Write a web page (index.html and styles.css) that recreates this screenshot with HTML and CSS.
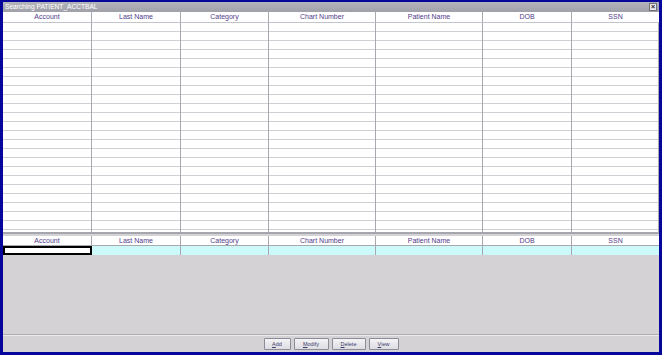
FILE: index.html
```html
<!DOCTYPE html>
<html>
<head>
<meta charset="utf-8">
<link rel="stylesheet" href="styles.css">
</head>
<body>
<div class="window">
  <div class="titlebar">
    <span class="title">Searching PATIENT_ACCTBAL</span>
    <span class="close">×</span>
  </div>
  <div class="grid results">
    <div class="hcell">Account</div>
    <div class="hcell">Last Name</div>
    <div class="hcell">Category</div>
    <div class="hcell">Chart Number</div>
    <div class="hcell">Patient Name</div>
    <div class="hcell">DOB</div>
    <div class="hcell last">SSN</div>
    <div class="bcell"></div>
    <div class="bcell"></div>
    <div class="bcell"></div>
    <div class="bcell"></div>
    <div class="bcell"></div>
    <div class="bcell"></div>
    <div class="bcell last"></div>
  </div>
  <div class="grid filter">
    <div class="hcell">Account</div>
    <div class="hcell">Last Name</div>
    <div class="hcell">Category</div>
    <div class="hcell">Chart Number</div>
    <div class="hcell">Patient Name</div>
    <div class="hcell">DOB</div>
    <div class="hcell last">SSN</div>
    <div class="fcell selected"></div>
    <div class="fcell"></div>
    <div class="fcell"></div>
    <div class="fcell"></div>
    <div class="fcell"></div>
    <div class="fcell"></div>
    <div class="fcell last"></div>
  </div>
  <div class="spacer"></div>
  <div class="buttonbar">
    <button class="btn btn-add"><u>A</u>dd</button>
    <button class="btn btn-modify"><u>M</u>odify</button>
    <button class="btn btn-delete"><u>D</u>elete</button>
    <button class="btn btn-view"><u>V</u>iew</button>
  </div>
</div>
</body>
</html>
```
FILE: styles.css
```css
html, body {
  margin: 0;
  padding: 0;
}
body {
  background: #06069a;
  width: 662px;
  height: 355px;
  overflow: hidden;
  font-family: "Liberation Sans", Arial, sans-serif;
}
.window {
  margin: 2px 3px 3px 3px;
  height: 350px;
  background: #d5d2d6;
  display: flex;
  flex-direction: column;
}
.titlebar {
  height: 10px;
  background: linear-gradient(#b4b4bc, #a0a0aa);
  display: flex;
  align-items: center;
  justify-content: space-between;
  padding: 0 2px 0 2px;
}
.title {
  color: #ffffff;
  font-size: 6.6px;
  font-weight: normal;
  line-height: 10px;
}
.close {
  width: 8px;
  height: 8px;
  background: #e8e8ec;
  border: 1px solid #707078;
  box-sizing: border-box;
  font-size: 7px;
  line-height: 6px;
  text-align: center;
  color: #202020;
  font-weight: bold;
}
.grid {
  display: grid;
  grid-template-columns: 89px 89px 88px 107px 107px 89px 87px;
}
.results {
  height: 220px;
  grid-template-rows: 11px 1fr;
  background: #ffffff;
  border-bottom: 2px solid #a6a6ae;
}
.hcell {
  background: #ffffff;
  color: #523c8c;
  font-size: 7px;
  line-height: 10px;
  text-align: center;
  border-right: 1px solid #a8a8b0;
  border-bottom: 1px solid #c4c4cc;
}
.last {
  border-right: none;
}
.bcell {
  border-right: 1px solid #a8a8b0;
  background: repeating-linear-gradient(to bottom, #ffffff 0, #ffffff 8px, #cfcfd6 8px, #cfcfd6 9px);
}
.filter {
  margin-top: 2px;
  grid-template-rows: 10px 9px;
}
.filter .hcell {
  border-bottom: 1px solid #a8a8b0;
}
.fcell {
  background: #ccfafa;
  border-right: 1px solid #a8a8b0;
}
.fcell.selected {
  background: #ffffff;
  border: 1px solid #000000;
  outline: 1px solid #000000;
  outline-offset: -2px;
}
.fcell.last {
  border-right: none;
}
.spacer {
  flex: 1;
  border-bottom: 1px solid #b0adb2;
  box-shadow: 0 1px 0 #ebe9ec;
}
.buttonbar {
  height: 17px;
  display: flex;
  justify-content: center;
  align-items: center;
  gap: 3px;
}
.btn {
  height: 12px;
  padding: 0;
  margin: 0;
  background: linear-gradient(#f4f4f6, #dcdce2);
  border: 1px solid #8c8c98;
  border-radius: 1px;
  font-family: "Liberation Sans", Arial, sans-serif;
  font-size: 5.5px;
  color: #3a3a6a;
  line-height: 10px;
}
.btn-add { width: 27px; }
.btn-modify { width: 35px; }
.btn-delete { width: 34px; }
.btn-view { width: 30px; }
```
